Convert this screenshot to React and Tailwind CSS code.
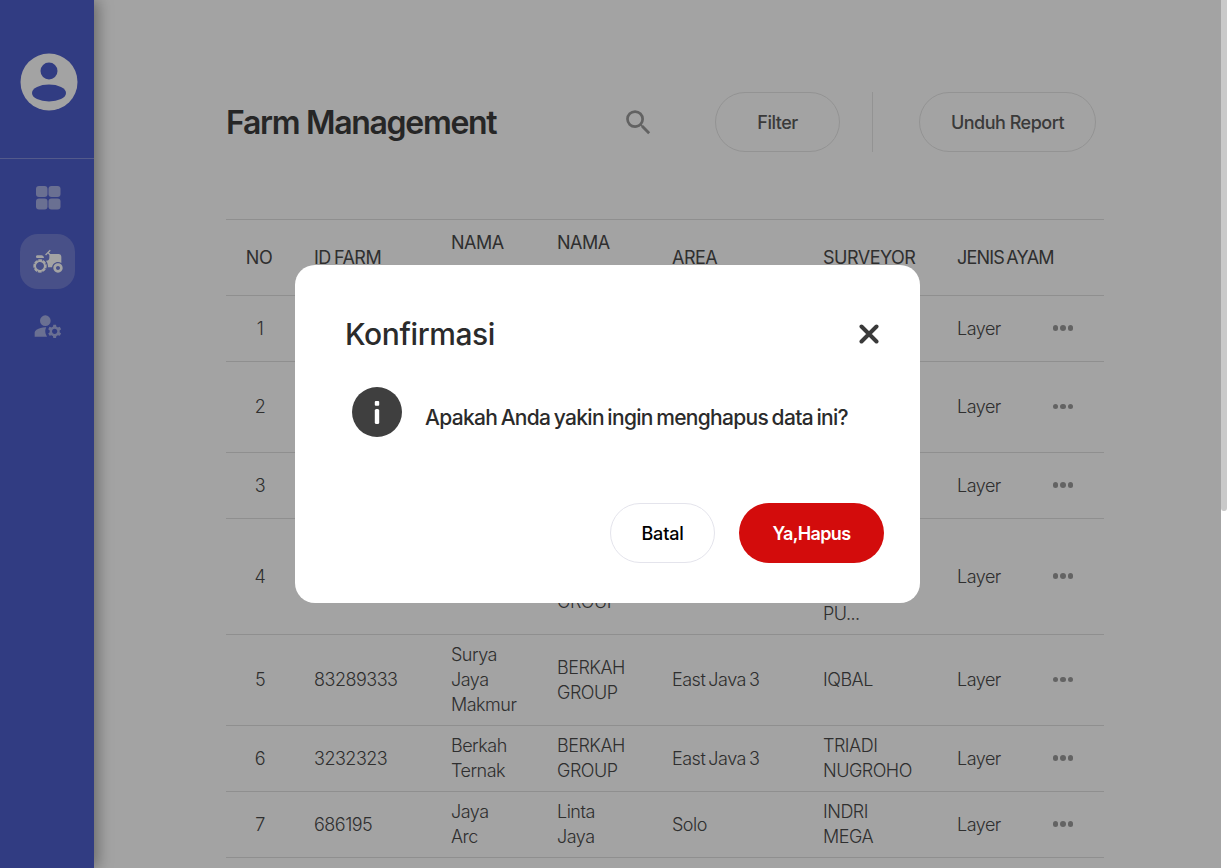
import React from 'react';
import { MdAgriculture, MdManageAccounts, MdSearch } from 'react-icons/md';

const rows = [
  { no: 1, id: '4418203', nama: 'Berkah\nTernak', group: 'BERKAH\nGROUP', area: 'East Java 3', surveyor: 'TRIADI\nNUGROHO' },
  { no: 2, id: '5530127', nama: 'Surya\nJaya\nMakmur', group: 'BERKAH\nGROUP', area: 'East Java 3', surveyor: 'IQBAL' },
  { no: 3, id: '7120954', nama: 'Jaya\nArc', group: 'Linta\nJaya', area: 'Solo', surveyor: 'INDRI\nMEGA' },
  { no: 4, id: '2290316', nama: 'Berkah\nTernak', group: 'BERKAH\nJAYA\nGROUP', area: 'East Java 3', surveyor: 'TRIADI\nNUGROHO\nADI\nPU...' },
  { no: 5, id: '83289333', nama: 'Surya\nJaya\nMakmur', group: 'BERKAH\nGROUP', area: 'East Java 3', surveyor: 'IQBAL' },
  { no: 6, id: '3232323', nama: 'Berkah\nTernak', group: 'BERKAH\nGROUP', area: 'East Java 3', surveyor: 'TRIADI\nNUGROHO' },
  { no: 7, id: '686195', nama: 'Jaya\nArc', group: 'Linta\nJaya', area: 'Solo', surveyor: 'INDRI\nMEGA' },
];

const Sidebar = () => (
  <aside className="w-[94px] h-[868px] shrink-0 bg-[#4e5ecb] shadow-[4px_0_14px_rgba(0,0,0,0.35)] flex flex-col items-center relative">
    <div className="h-[159px] w-full border-b border-white/30 flex items-start justify-center pt-[53px] pl-[4px]">
      <svg width="58" height="58" viewBox="0 0 58 58">
        <circle cx="29" cy="29" r="28.5" fill="#fff" />
        <circle cx="29" cy="18" r="8.5" fill="#4e5ecb" />
        <ellipse cx="29" cy="40" rx="17" ry="8.5" fill="#4e5ecb" />
      </svg>
    </div>
    <div className="flex flex-col items-center pt-[27px] pl-[1px]">
      <svg width="25" height="24" viewBox="0 0 25 24" className="ml-[1px]">
        <rect x="0" y="0" width="11.5" height="11" rx="3" fill="#fff" fillOpacity="0.5" />
        <rect x="12.5" y="0" width="12" height="11" rx="3" fill="#fff" fillOpacity="0.5" />
        <rect x="0" y="12.5" width="11.5" height="11" rx="3" fill="#fff" fillOpacity="0.5" />
        <rect x="12.5" y="12.5" width="12" height="11" rx="3" fill="#fff" fillOpacity="0.5" />
      </svg>
      <div className="mt-[24px] w-[55px] h-[55px] rounded-[18px] bg-white/20 flex items-center justify-center text-white">
        <MdAgriculture size={32} />
      </div>
      <div className="mt-[21px] text-white/50">
        <MdManageAccounts size={32} />
      </div>
    </div>
  </aside>
);

const Dots = () => (
  <div className="flex gap-[2px]">
    <span className="w-[5.5px] h-[5.5px] rounded-full bg-[#9c9c9c]" />
    <span className="w-[5.5px] h-[5.5px] rounded-full bg-[#9c9c9c]" />
    <span className="w-[5.5px] h-[5.5px] rounded-full bg-[#9c9c9c]" />
  </div>
);

const Th = ({ className = '', children }) => (
  <th className={`px-5 text-left font-normal whitespace-pre-line ${className}`}>{children}</th>
);

const Td = ({ children }) => (
  <td className="px-5 pt-[7px] pb-[8px] whitespace-pre-line align-middle">{children}</td>
);

const Table = () => (
  <table className="w-[878px] table-fixed border-collapse text-[18px] font-light leading-[25px] tracking-[-0.5px] [word-spacing:-1.5px] text-[#4a4a4a] mt-[67px]">
    <thead>
      <tr className="border-y border-[#e0e0e0]">
        <Th className="w-[68px] !text-center !pl-[19px] !pr-[21px]">NO</Th>
        <Th className="w-[137px]">ID FARM</Th>
        <Th className="w-[106px] pt-[8px] pb-[7px] leading-[30px]">NAMA{'\n'}FARM</Th>
        <Th className="w-[115px] pt-[8px] pb-[7px] leading-[30px]">NAMA{'\n'}GROUP</Th>
        <Th className="w-[151px]">AREA</Th>
        <Th className="w-[134px]">SURVEYOR</Th>
        <Th className="w-[167px] tracking-[-0.8px] [word-spacing:-2px]">JENIS AYAM</Th>
      </tr>
    </thead>
    <tbody>
      {rows.map((row) => (
        <tr key={row.no} className="border-b border-[#e0e0e0]">
          <td className="px-5 pt-[7px] pb-[8px] text-center">{row.no}</td>
          <Td>{row.id}</Td>
          <Td>{row.nama}</Td>
          <Td>{row.group}</Td>
          <Td>{row.area}</Td>
          <Td>{row.surveyor}</Td>
          <td className="px-5 pt-[7px] pb-[8px]">
            <div className="flex items-center justify-between pr-[11px]">
              <span>Layer</span>
              <Dots />
            </div>
          </td>
        </tr>
      ))}
    </tbody>
  </table>
);

const Modal = () => (
  <div className="w-[625px] h-[338px] bg-white rounded-[20px] pl-[50px] pr-[36px] pt-[48px] flex flex-col text-[#2b2b2b]">
    <div className="flex items-center justify-between h-[42px]">
      <h2 className="text-[30px] leading-[42px] font-medium tracking-[-0.4px]">Konfirmasi</h2>
      <svg width="20" height="20" viewBox="0 0 20 20" className="mr-[5px]">
        <path d="M2.5 2.5 L17.5 17.5 M17.5 2.5 L2.5 17.5" stroke="#3a3a3a" strokeWidth="4" strokeLinecap="round" />
      </svg>
    </div>
    <div className="flex items-start mt-[32px] pl-[7px]">
      <svg width="50" height="50" viewBox="0 0 50 50" className="shrink-0">
        <circle cx="25" cy="25" r="25" fill="#3f3f3f" />
        <rect x="22.8" y="14" width="4.4" height="4.8" rx="1" fill="#fff" />
        <rect x="22.8" y="22" width="4.4" height="15" rx="1.6" fill="#fff" />
      </svg>
      <p className="ml-[23px] mt-[17px] text-[21px] leading-[28px] font-medium tracking-[-0.68px] [word-spacing:-1.5px] whitespace-nowrap">
        Apakah Anda yakin ingin menghapus data ini?
      </p>
    </div>
    <div className="flex justify-end gap-6 mt-[66px]">
      <button className="w-[105px] h-[60px] rounded-full border border-[#e4e4ec] bg-white text-black text-[18px] font-medium tracking-[-0.2px]">
        Batal
      </button>
      <button className="w-[145px] h-[60px] rounded-full bg-[#d30c0c] text-white text-[18px] font-semibold tracking-[-0.65px]">
        Ya,Hapus
      </button>
    </div>
  </div>
);

export default function App() {
  return (
    <div className="relative w-[1227px] h-[868px] overflow-hidden bg-white flex font-['Inter','Liberation_Sans',sans-serif]">
      <Sidebar />
      <main className="w-[1127px] shrink-0 pl-[132px] pt-[92px]">
        <div className="flex items-center h-[60px] w-[870px] text-[#5c5c5c]">
          <h1 className="text-[32px] pt-[2px] font-semibold tracking-[-1.3px] text-[#3c3c3c] w-[396px]">Farm Management</h1>
          <MdSearch size={33} className="text-[#9a9a9a] mr-[60px]" />
          <button className="w-[125px] h-[60px] rounded-full border border-[#e6e6e6] text-[18px] font-medium tracking-[-0.5px]">
            Filter
          </button>
          <div className="w-px h-[60px] bg-[#e6e6e6] ml-[32px] mr-[46px]" />
          <button className="w-[177px] h-[60px] rounded-full border border-[#e6e6e6] text-[18px] font-medium tracking-[-0.5px]">
            Unduh Report
          </button>
        </div>
        <Table />
      </main>
      {/* scrollbar */}
      <div className="w-[6px] h-[868px] shrink-0 bg-white">
        <div className="h-[511px] rounded-b-[3px] bg-[#c9c9c9]" />
      </div>
      <div className="absolute top-0 bottom-0 left-0 right-[6px] bg-black/36 flex items-center justify-center pr-[6px]">
        <Modal />
      </div>
    </div>
  );
}
